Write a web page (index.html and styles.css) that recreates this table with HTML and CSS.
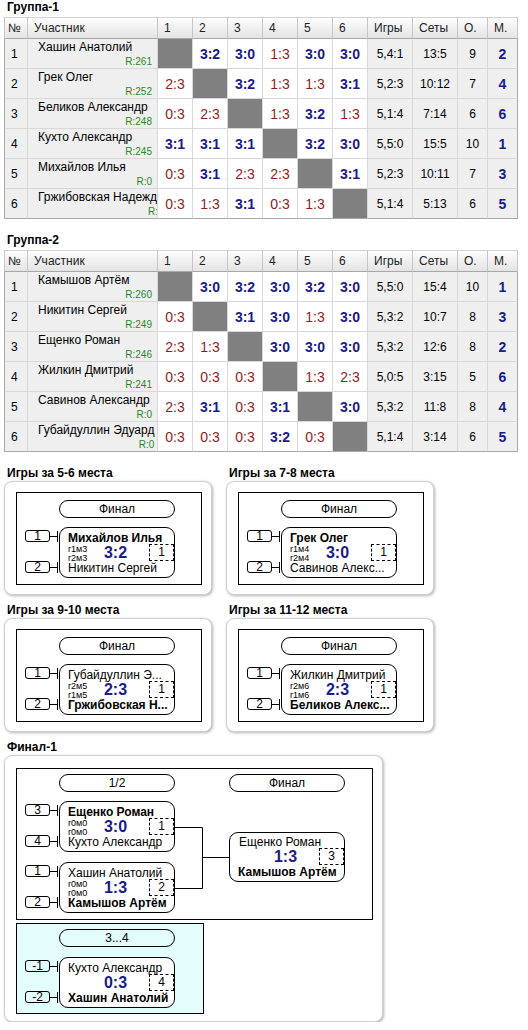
FILE: index.html
```html
<!DOCTYPE html>
<html>
<head>
    <meta charset="utf-8">
    <title>Турнир</title>
    <link rel="stylesheet" href="styles.css">
</head>
<body>
    <div class="group">
        <div class="caption">Группа-1</div>
        <table class="standings">
            <colgroup>
                <col class="c-no"><col class="c-name">
                <col class="c-g"><col class="c-g"><col class="c-g"><col class="c-g"><col class="c-g"><col class="c-g">
                <col class="c-s"><col class="c-s"><col class="c-p"><col class="c-p">
            </colgroup>
            <thead>
                <tr class="head">
                    <th class="no">№</th><th>Участник</th>
                    <th>1</th><th>2</th><th>3</th><th>4</th><th>5</th><th>6</th>
                    <th>Игры</th><th>Сеты</th><th>О.</th><th>М.</th>
                </tr>
            </thead>
            <tbody>
                <tr>
                    <td class="no">1</td>
                    <td class="who"><div class="clip"><div class="who-in"><div class="nm">Хашин Анатолий</div><div class="rt">R:261</div></div></div></td>
                    <td class="x"></td><td class="w">3:2</td><td class="w">3:0</td><td class="l">1:3</td><td class="w">3:0</td><td class="w">3:0</td>
                    <td class="st">5,4:1</td><td class="st">13:5</td><td class="st">9</td><td class="st pos">2</td>
                </tr>
                <tr>
                    <td class="no">2</td>
                    <td class="who"><div class="clip"><div class="who-in"><div class="nm">Грек Олег</div><div class="rt">R:252</div></div></div></td>
                    <td class="l">2:3</td><td class="x"></td><td class="w">3:2</td><td class="l">1:3</td><td class="l">1:3</td><td class="w">3:1</td>
                    <td class="st">5,2:3</td><td class="st">10:12</td><td class="st">7</td><td class="st pos">4</td>
                </tr>
                <tr>
                    <td class="no">3</td>
                    <td class="who"><div class="clip"><div class="who-in"><div class="nm">Беликов Александр</div><div class="rt">R:248</div></div></div></td>
                    <td class="l">0:3</td><td class="l">2:3</td><td class="x"></td><td class="l">1:3</td><td class="w">3:2</td><td class="l">1:3</td>
                    <td class="st">5,1:4</td><td class="st">7:14</td><td class="st">6</td><td class="st pos">6</td>
                </tr>
                <tr>
                    <td class="no">4</td>
                    <td class="who"><div class="clip"><div class="who-in"><div class="nm">Кухто Александр</div><div class="rt">R:245</div></div></div></td>
                    <td class="w">3:1</td><td class="w">3:1</td><td class="w">3:1</td><td class="x"></td><td class="w">3:2</td><td class="w">3:0</td>
                    <td class="st">5,5:0</td><td class="st">15:5</td><td class="st">10</td><td class="st pos">1</td>
                </tr>
                <tr>
                    <td class="no">5</td>
                    <td class="who"><div class="clip"><div class="who-in"><div class="nm">Михайлов Илья</div><div class="rt">R:0</div></div></div></td>
                    <td class="l">0:3</td><td class="w">3:1</td><td class="l">2:3</td><td class="l">2:3</td><td class="x"></td><td class="w">3:1</td>
                    <td class="st">5,2:3</td><td class="st">10:11</td><td class="st">7</td><td class="st pos">3</td>
                </tr>
                <tr>
                    <td class="no">6</td>
                    <td class="who"><div class="clip"><div class="who-in"><div class="nm">Гржибовская Надежда</div><div class="rt">R:0</div></div></div></td>
                    <td class="l">0:3</td><td class="l">1:3</td><td class="w">3:1</td><td class="l">0:3</td><td class="l">1:3</td><td class="x"></td>
                    <td class="st">5,1:4</td><td class="st">5:13</td><td class="st">6</td><td class="st pos">5</td>
                </tr>
            </tbody>
        </table>
    </div>

    <div class="group">
        <div class="caption">Группа-2</div>
        <table class="standings">
            <colgroup>
                <col class="c-no"><col class="c-name">
                <col class="c-g"><col class="c-g"><col class="c-g"><col class="c-g"><col class="c-g"><col class="c-g">
                <col class="c-s"><col class="c-s"><col class="c-p"><col class="c-p">
            </colgroup>
            <thead>
                <tr class="head">
                    <th class="no">№</th><th>Участник</th>
                    <th>1</th><th>2</th><th>3</th><th>4</th><th>5</th><th>6</th>
                    <th>Игры</th><th>Сеты</th><th>О.</th><th>М.</th>
                </tr>
            </thead>
            <tbody>
                <tr>
                    <td class="no">1</td>
                    <td class="who"><div class="clip"><div class="who-in"><div class="nm">Камышов Артём</div><div class="rt">R:260</div></div></div></td>
                    <td class="x"></td><td class="w">3:0</td><td class="w">3:2</td><td class="w">3:0</td><td class="w">3:2</td><td class="w">3:0</td>
                    <td class="st">5,5:0</td><td class="st">15:4</td><td class="st">10</td><td class="st pos">1</td>
                </tr>
                <tr>
                    <td class="no">2</td>
                    <td class="who"><div class="clip"><div class="who-in"><div class="nm">Никитин Сергей</div><div class="rt">R:249</div></div></div></td>
                    <td class="l">0:3</td><td class="x"></td><td class="w">3:1</td><td class="w">3:0</td><td class="l">1:3</td><td class="w">3:0</td>
                    <td class="st">5,3:2</td><td class="st">10:7</td><td class="st">8</td><td class="st pos">3</td>
                </tr>
                <tr>
                    <td class="no">3</td>
                    <td class="who"><div class="clip"><div class="who-in"><div class="nm">Ещенко Роман</div><div class="rt">R:246</div></div></div></td>
                    <td class="l">2:3</td><td class="l">1:3</td><td class="x"></td><td class="w">3:0</td><td class="w">3:0</td><td class="w">3:0</td>
                    <td class="st">5,3:2</td><td class="st">12:6</td><td class="st">8</td><td class="st pos">2</td>
                </tr>
                <tr>
                    <td class="no">4</td>
                    <td class="who"><div class="clip"><div class="who-in"><div class="nm">Жилкин Дмитрий</div><div class="rt">R:241</div></div></div></td>
                    <td class="l">0:3</td><td class="l">0:3</td><td class="l">0:3</td><td class="x"></td><td class="l">1:3</td><td class="l">2:3</td>
                    <td class="st">5,0:5</td><td class="st">3:15</td><td class="st">5</td><td class="st pos">6</td>
                </tr>
                <tr>
                    <td class="no">5</td>
                    <td class="who"><div class="clip"><div class="who-in"><div class="nm">Савинов Александр</div><div class="rt">R:0</div></div></div></td>
                    <td class="l">2:3</td><td class="w">3:1</td><td class="l">0:3</td><td class="w">3:1</td><td class="x"></td><td class="w">3:0</td>
                    <td class="st">5,3:2</td><td class="st">11:8</td><td class="st">8</td><td class="st pos">4</td>
                </tr>
                <tr>
                    <td class="no">6</td>
                    <td class="who"><div class="clip"><div class="who-in"><div class="nm">Губайдуллин Эдуард</div><div class="rt">R:0</div></div></div></td>
                    <td class="l">0:3</td><td class="l">0:3</td><td class="l">0:3</td><td class="w">3:2</td><td class="l">0:3</td><td class="x"></td>
                    <td class="st">5,1:4</td><td class="st">3:14</td><td class="st">6</td><td class="st pos">5</td>
                </tr>
            </tbody>
        </table>
    </div>

    <div class="cups">
        <div class="cup">
            <div class="caption">Игры за 5-6 места</div>
            <div class="panel">
                <div class="bracket">
                    <div class="round">
                        <div class="stage">Финал</div>
                        <div class="pair">
                            <div class="seeds">
                                <div class="seed"><span class="num">1</span><i class="link"></i></div>
                                <div class="seed"><span class="num">2</span><i class="link"></i></div>
                            </div>
                            <div class="match">
                                <div class="pl win">Михайлов Илья</div>
                                <div class="mid"><div class="tags">r1м3<br>r2м3</div><div class="score">3:2</div><div class="place">1</div></div>
                                <div class="pl">Никитин Сергей</div>
                            </div>
                        </div>
                    </div>
                </div>
            </div>
        </div>
        <div class="cup">
            <div class="caption">Игры за 7-8 места</div>
            <div class="panel">
                <div class="bracket">
                    <div class="round">
                        <div class="stage">Финал</div>
                        <div class="pair">
                            <div class="seeds">
                                <div class="seed"><span class="num">1</span><i class="link"></i></div>
                                <div class="seed"><span class="num">2</span><i class="link"></i></div>
                            </div>
                            <div class="match">
                                <div class="pl win">Грек Олег</div>
                                <div class="mid"><div class="tags">r1м4<br>r2м4</div><div class="score">3:0</div><div class="place">1</div></div>
                                <div class="pl">Савинов Алекс...</div>
                            </div>
                        </div>
                    </div>
                </div>
            </div>
        </div>
        <div class="cup">
            <div class="caption">Игры за 9-10 места</div>
            <div class="panel">
                <div class="bracket">
                    <div class="round">
                        <div class="stage">Финал</div>
                        <div class="pair">
                            <div class="seeds">
                                <div class="seed"><span class="num">1</span><i class="link"></i></div>
                                <div class="seed"><span class="num">2</span><i class="link"></i></div>
                            </div>
                            <div class="match">
                                <div class="pl">Губайдуллин Э...</div>
                                <div class="mid"><div class="tags">r2м5<br>r1м5</div><div class="score">2:3</div><div class="place">1</div></div>
                                <div class="pl win">Гржибовская Н...</div>
                            </div>
                        </div>
                    </div>
                </div>
            </div>
        </div>
        <div class="cup">
            <div class="caption">Игры за 11-12 места</div>
            <div class="panel">
                <div class="bracket">
                    <div class="round">
                        <div class="stage">Финал</div>
                        <div class="pair">
                            <div class="seeds">
                                <div class="seed"><span class="num">1</span><i class="link"></i></div>
                                <div class="seed"><span class="num">2</span><i class="link"></i></div>
                            </div>
                            <div class="match">
                                <div class="pl">Жилкин Дмитрий</div>
                                <div class="mid"><div class="tags">r2м6<br>r1м6</div><div class="score">2:3</div><div class="place">1</div></div>
                                <div class="pl win">Беликов Алекс...</div>
                            </div>
                        </div>
                    </div>
                </div>
            </div>
        </div>
    </div>

    <div class="cup final-cup">
        <div class="caption">Финал-1</div>
        <div class="panel big">
            <div class="bracket final">
                <div class="final-grid">
                    <div class="stage s1">1/2</div>
                    <div class="stage s2">Финал</div>
                    <div class="pairs">
                        <div class="pair">
                            <div class="seeds">
                                <div class="seed"><span class="num">3</span><i class="link"></i></div>
                                <div class="seed"><span class="num">4</span><i class="link"></i></div>
                            </div>
                            <div class="match">
                                <div class="pl win">Ещенко Роман</div>
                                <div class="mid"><div class="tags">r0м0<br>r0м0</div><div class="score">3:0</div><div class="place">1</div></div>
                                <div class="pl">Кухто Александр</div>
                            </div>
                        </div>
                        <div class="pair">
                            <div class="seeds">
                                <div class="seed"><span class="num">1</span><i class="link"></i></div>
                                <div class="seed"><span class="num">2</span><i class="link"></i></div>
                            </div>
                            <div class="match">
                                <div class="pl">Хашин Анатолий</div>
                                <div class="mid"><div class="tags">r0м0<br>r0м0</div><div class="score">1:3</div><div class="place">2</div></div>
                                <div class="pl win">Камышов Артём</div>
                            </div>
                        </div>
                    </div>
                    <svg class="links" width="54" height="112" viewBox="0 0 54 112">
                        <path d="M0 26.5H27.5V87.5H0M27.5 56.5H54" fill="none" stroke="#000" stroke-width="1"/>
                    </svg>
                    <div class="match last">
                        <div class="pl pl-wide">Ещенко Роман</div>
                        <div class="mid"><div class="tags"></div><div class="score">1:3</div><div class="place">3</div></div>
                        <div class="pl win">Камышов Артём</div>
                    </div>
                </div>
            </div>
            <div class="bracket third">
                <div class="round">
                    <div class="stage">3...4</div>
                    <div class="pair">
                        <div class="seeds">
                            <div class="seed"><span class="num">-1</span><i class="link"></i></div>
                            <div class="seed"><span class="num">-2</span><i class="link"></i></div>
                        </div>
                        <div class="match">
                            <div class="pl">Кухто Александр</div>
                            <div class="mid"><div class="tags"></div><div class="score">0:3</div><div class="place">4</div></div>
                            <div class="pl win">Хашин Анатолий</div>
                        </div>
                    </div>
                </div>
            </div>
        </div>
    </div>
</body>
</html>
```

FILE: styles.css
```css
body {
    font-family: 'Liberation Sans', Arial, sans-serif;
    font-size: 12px;
    color: #000;
    background: #fff;
    margin: 0;
    padding: 0 4px;
}
.caption {
    font-weight: bold;
    font-size: 12px;
    line-height: 15px;
    padding-left: 3px;
    margin-bottom: 2px;
}
.cup .caption {
    margin-bottom: 0;
}
.group {
    margin-bottom: 14px;
}

/* group tables */
.standings {
    width: 514px;
    table-layout: fixed;
    border-collapse: separate;
    border-spacing: 0;
    font-size: 12px;
}
.c-no { width: 24px; }
.c-name { width: 130px; }
.c-g { width: 35px; }
.c-s { width: 45px; }
.c-p { width: 30px; }
.standings tr.head {
    height: 22px;
}
.standings th {
    font-weight: normal;
    text-align: left;
    padding: 0 6px;
    color: #222;
    background: linear-gradient(#fdfdfd, #e4e4e4);
    border-top: 1px solid #d2d2d2;
    border-right: 1px solid #c6c6c6;
    border-bottom: 1px solid #a8a8a8;
}
.standings th:first-child {
    border-left: 1px solid #c6c6c6;
}
.standings th.no {
    padding: 0 3px;
}
.standings tbody tr {
    height: 30px;
}
.standings td {
    border-right: 1px solid #d8d8d8;
    border-bottom: 1px solid #d8d8d8;
    text-align: center;
    padding: 0;
    background: #fff;
}
.standings tbody tr:last-child td {
    border-bottom: 1px solid #a8a8a8;
}
.standings td:first-child {
    border-left: 1px solid #a8a8a8;
}
.standings td:last-child {
    border-right: 1px solid #a8a8a8;
}
.standings td.no {
    text-align: left;
    padding-left: 6px;
    background: #efefef;
}
.standings td.who {
    vertical-align: top;
    text-align: left;
    background: #efefef;
}
.clip {
    overflow: hidden;
}
.who-in {
    display: inline-block;
    min-width: 100%;
    box-sizing: border-box;
    white-space: nowrap;
    padding: 1px 5px 0 10px;
}
.nm {
    line-height: 14px;
}
.rt {
    font-size: 10px;
    line-height: 12px;
    margin-top: 2px;
    text-align: right;
    color: #1f8a1f;
}
.standings td.x {
    background: #808080;
}
.standings td.w {
    font-size: 14px;
    font-weight: bold;
    color: #1a1a8a;
}
.standings td.l {
    font-size: 14px;
    color: #8e1e1e;
}
.standings td.st {
    background: #efefef;
}
.standings td.pos {
    font-size: 14px;
    font-weight: bold;
    color: #1a1a8a;
}

/* brackets */
.cups {
    display: grid;
    grid-template-columns: 208px 208px;
    column-gap: 14px;
    row-gap: 8px;
    margin-bottom: 8px;
}
.panel {
    width: fit-content;
    background: #fff;
    border: 1px solid #cfcfcf;
    border-radius: 8px;
    box-shadow: 1px 1px 3px rgba(0, 0, 0, 0.3);
    padding: 10px 9px 9px 11px;
}
.panel.big {
    padding: 12px 9px 7px 11px;
}
.bracket {
    width: 186px;
    box-sizing: border-box;
    border: 1px solid #000;
    background: #fff;
    padding: 7px 0 6px 8px;
}
.round {
    display: flex;
    flex-direction: column;
    gap: 9px;
}
.stage {
    margin-left: 34px;
    width: 116px;
    height: 18px;
    box-sizing: border-box;
    border: 1px solid #000;
    border-radius: 9px;
    text-align: center;
    line-height: 16px;
}
.pair {
    display: flex;
}
.seeds {
    width: 34px;
    box-sizing: border-box;
    padding: 3px 0 5px;
    display: flex;
    flex-direction: column;
    justify-content: space-between;
}
.seed {
    display: flex;
    align-items: center;
}
.num {
    width: 25px;
    height: 12px;
    box-sizing: border-box;
    border: 1px solid #000;
    border-radius: 3px;
    text-align: center;
    line-height: 10px;
}
.link {
    width: 9px;
    height: 11px;
    background:
        linear-gradient(#000, #000) 0 50% / 8px 1px no-repeat,
        linear-gradient(#000, #000) 7px 0 / 1px 11px no-repeat;
}
.match {
    width: 116px;
    height: 51px;
    box-sizing: border-box;
    border: 1px solid #000;
    border-radius: 9px;
    padding: 3px 0 0 8px;
    background: #fff;
}
.pl {
    height: 14px;
    line-height: 14px;
    white-space: nowrap;
    overflow: hidden;
}
.pl.win {
    font-weight: bold;
}
.mid {
    display: flex;
    align-items: center;
    height: 16px;
}
.tags {
    width: 20px;
    height: 16px;
    font-size: 9px;
    line-height: 9px;
    margin-top: -1px;
    white-space: nowrap;
}
.score {
    flex: 1;
    text-align: center;
    padding-right: 6px;
    font-size: 16px;
    line-height: 16px;
    font-weight: bold;
    color: #1a1a8a;
}
.place {
    width: 25px;
    height: 17px;
    box-sizing: border-box;
    border: 1px dashed #000;
    text-align: center;
    line-height: 15px;
    margin-top: -1px;
}

/* final */
.bracket.final {
    width: 357px;
    padding: 5px 0 6px 8px;
}
.final-grid {
    display: grid;
    grid-template-columns: 34px 116px 54px 116px;
    grid-template-rows: 18px auto;
    row-gap: 9px;
}
.final-grid .stage {
    margin-left: 0;
}
.final-grid .s1 {
    grid-column: 2;
    grid-row: 1;
}
.final-grid .s2 {
    grid-column: 4;
    grid-row: 1;
}
.pairs {
    grid-column: 1 / 3;
    grid-row: 2;
    display: flex;
    flex-direction: column;
    gap: 10px;
}
.links {
    grid-column: 3;
    grid-row: 2;
    display: block;
}
.match.last {
    grid-column: 4;
    grid-row: 2;
    align-self: center;
    height: 50px;
    padding-top: 2px;
}
.pl-wide {
    padding-left: 1px;
}
.bracket.third {
    width: 188px;
    margin-top: 3px;
    background: #e3fcfc;
    padding: 5px 0 5px 8px;
}
.bracket.third .round {
    gap: 10px;
}
```
